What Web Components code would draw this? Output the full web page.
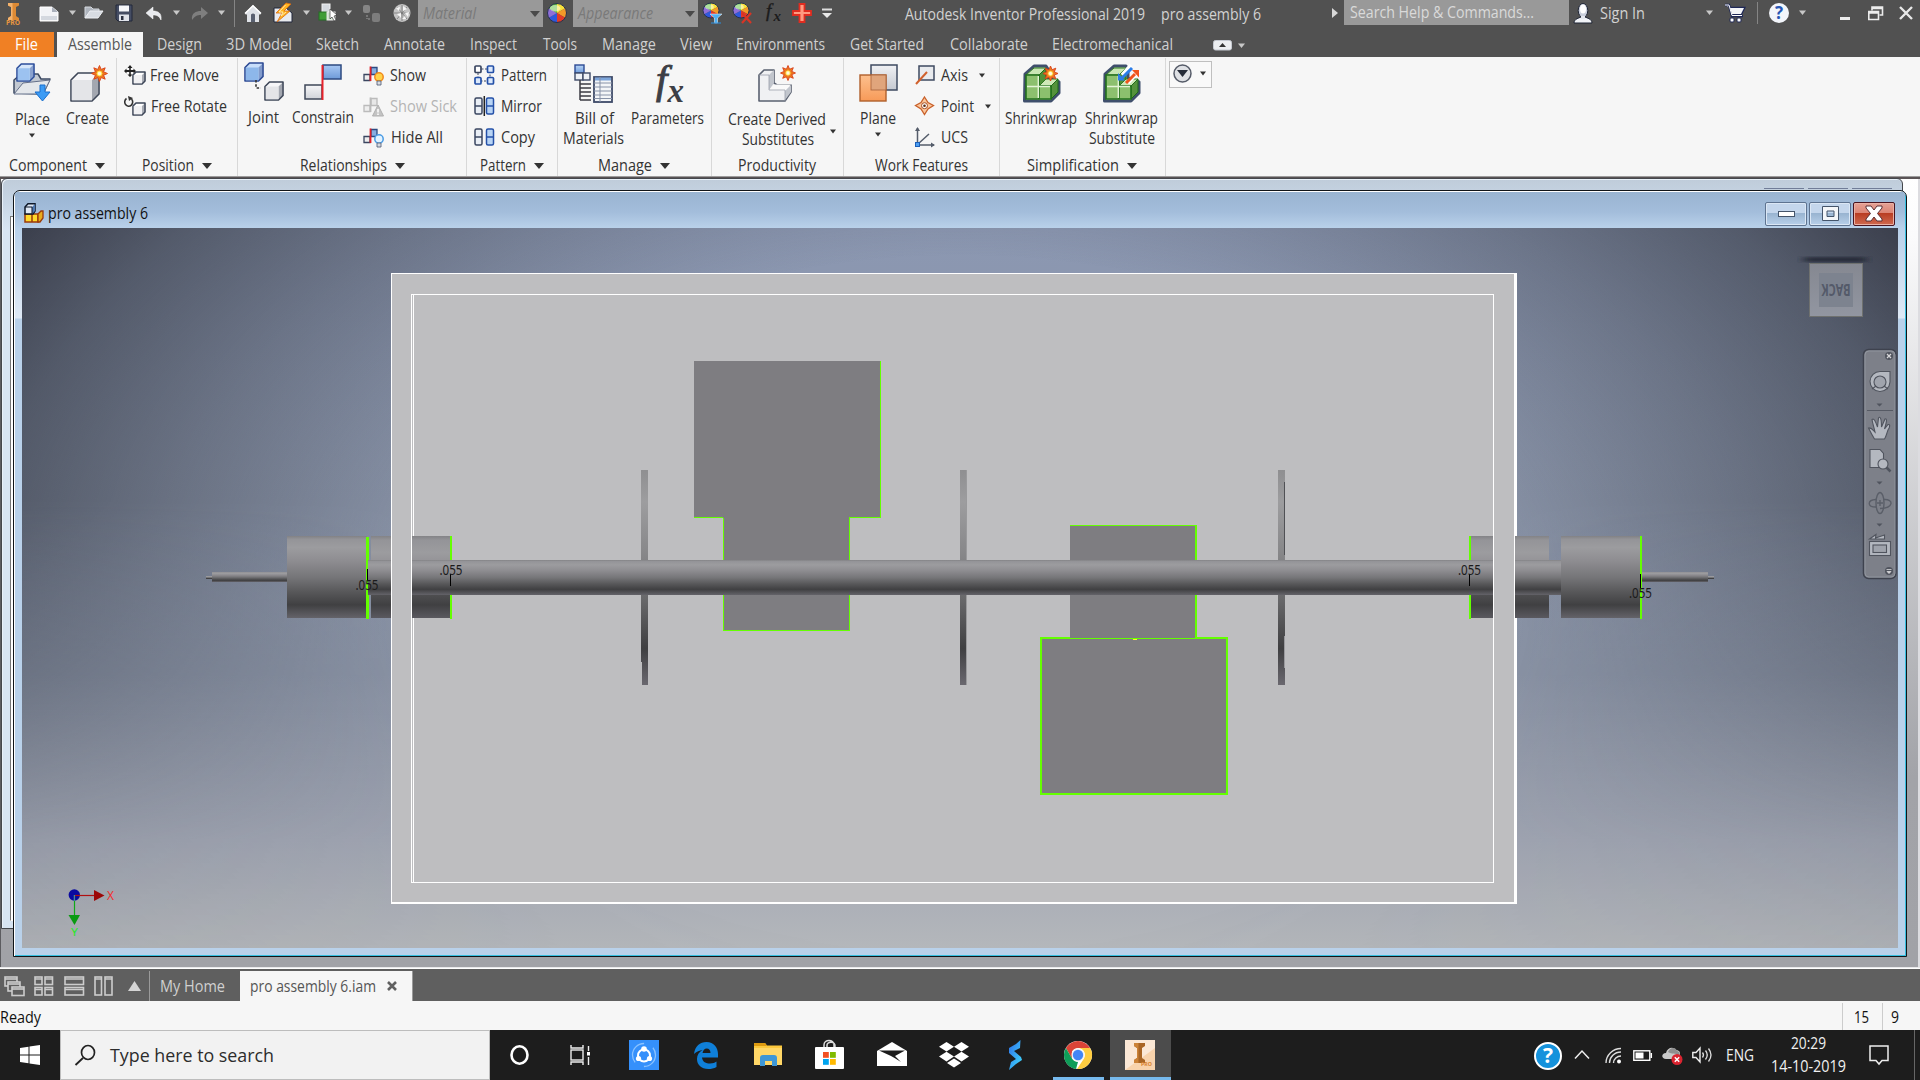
<!DOCTYPE html>
<html lang="en">
<head>
<meta charset="utf-8">
<title>Autodesk Inventor Professional 2019</title>
<style>
html,body{margin:0;padding:0;width:1920px;height:1080px;overflow:hidden;background:#f6f6f6}
body{font-family:"Open Sans","Noto Sans",sans-serif;font-size:15.8px;color:#333}
</style>
</head>
<body>
<inventor-app></inventor-app>
<script>
const define = (tag, cls) => customElements.define(tag, cls);
class Base extends HTMLElement {
  constructor() { super(); this.attachShadow({ mode: 'open' }); }
  connectedCallback() { this.shadowRoot.innerHTML = '<style>' + this.css() + '</style>' + this.html(); this.ready(); }
  css() { return ':host{display:block}'; }
  html() { return '<slot></slot>'; }
  ready() {}
}

/* A text run condensed or widened to the given width. */
define('fit-text', class extends Base {
  css() { return ':host{display:block;white-space:nowrap;height:20px;line-height:20px}span{display:inline-block;transform-origin:0 50%}'; }
  html() { return '<span><slot></slot></span>'; }
  ready() {
    const w = +this.getAttribute('w'), s = this.shadowRoot.querySelector('span');
    this.style.width = w + 'px';
    const n = s.getBoundingClientRect().width;
    if (n) s.style.transform = 'translateY(-1px) scaleX(' + (w / n).toFixed(4) + ')';
  }
});

/* Flex row: items are {x,y,w,html}; gaps become margins. */
const ROWCSS = '.row{display:flex;align-items:flex-start}.row>.c{flex:none}';
const row = (items, x0 = 0, y0 = 0) => {
  let p = x0;
  return '<div class="row">' + items.map(i => {
    const s = `<div class="c" style="margin-left:${(i.x - p).toFixed(1)}px;margin-top:${(i.y - y0).toFixed(1)}px;width:${i.w}px">${i.html}</div>`;
    p = i.x + i.w; return s;
  }).join('') + '</div>';
};
const T = (x, yc, w, s, st = '') => ({ x, y: yc - 10, w, html: `<fit-text w="${w}" style="${st}">${s}</fit-text>` });
const I = (x, y, w, h, name) => ({ x, y, w, html: `<ui-icon name="${name}" w="${w}" h="${h}"></ui-icon>` });
const B = (x, y, w, h, st, inner = '') => ({ x, y, w, html: `<div style="height:${h}px;${st}">${inner}</div>` });

const burst = (cx, cy, r) => { let p = ''; for (let i = 0; i < 16; i++) { const a = i * Math.PI / 8, q = i % 2 === 0 ? r : r * .55; p += (cx + q * Math.sin(a)).toFixed(1) + ',' + (cy - q * Math.cos(a)).toFixed(1) + ' '; } return `<polygon points="${p}" fill="#ee7a1c" stroke="#d8401a" stroke-width=".9"/><circle cx="${cx}" cy="${cy}" r="${r * .42}" fill="#ffe14a" stroke="#e8641a" stroke-width=".8"/><circle cx="${cx}" cy="${cy}" r="${r * .22}" fill="#fffbe0"/>`; };
const cube = (x, y, s, f, st, top = '#fff') => `<path d="M${x} ${y + s * .25}L${x + s * .25} ${y}H${x + s}V${y + s * .75}L${x + s * .75} ${y + s}H${x}Z" fill="${top}" stroke="${st}" stroke-width="1.6" stroke-linejoin="round"/><path d="M${x + s * .75} ${y + s * .25}L${x + s - .6} ${y + .8}V${y + s * .75}L${x + s * .75} ${y + s - 1}Z" fill="${st}" opacity=".45"/><rect x="${x + .8}" y="${y + s * .25}" width="${s * .75 - .8}" height="${s * .75 - .8}" fill="${f}"/>`;
const wheel = (cx, cy, rx, ry) => { const c2 = ['#f7e13a', '#f39a28', '#e23a28', '#3058dd', '#8f6fd8', '#5fbf3d']; let s = ''; for (let i = 0; i < 6; i++) { const a = i * Math.PI / 3, b = a + Math.PI / 3; s += `<path d="M${cx} ${cy}L${cx + rx * Math.sin(a)} ${cy - ry * Math.cos(a)}A${rx} ${ry} 0 0 1 ${cx + rx * Math.sin(b)} ${cy - ry * Math.cos(b)}Z" fill="${c2[i]}"/>`; } return s + `<ellipse cx="${cx}" cy="${cy}" rx="${rx}" ry="${ry}" fill="none" stroke="#26314f" stroke-width="1"/><ellipse cx="${cx - rx * .2}" cy="${cy - ry * .5}" rx="${rx * .55}" ry="${ry * .35}" fill="#fff" opacity=".5"/>`; };
const relation = (sick) => `<path d="M8 2.5h6v7h-6z" fill="${sick ? '#e8e8e8' : '#86aee0'}" stroke="${sick ? '#bbb' : '#2c4a80'}" stroke-width="1.3"/><path d="M1 9.500h6v6h-6z" fill="#eee" stroke="${sick ? '#bbb' : '#3a4660'}" stroke-width="1.3"/><path d="M7.500 1.500V16" stroke="${sick ? '#bbb' : '#e02028'}" stroke-width="1.800"/>`;
const brick = (l, r) => `<rect x="1" y="2" width="7" height="16" rx="1.500" fill="#e9eef5" stroke="${l}" stroke-width="1.500"/><path d="M1 10h7" stroke="${l}" stroke-width="1.500"/><rect x="12.500" y="2" width="7" height="16" rx="1.500" fill="#b8d4f5" stroke="${r}" stroke-width="1.500"/><path d="M12.500 10h7" stroke="${r}" stroke-width="1.500"/>`;
const shrink = `<path d="M3 10L12 2H24L26 5V14L37 18V29L29 37H2.500Z" fill="#cfe8b8" stroke="#3f4f6c" stroke-width="3" stroke-linejoin="round"/><path d="M4 11L12 4H24L17 11Z" fill="#c9e6b4" stroke="#2f7a22"/><path d="M17 11L24 4V16L17 22Z" fill="#4f9138" stroke="#1f6a18"/><path d="M17 22L24 15H36L29 22Z" fill="#cfe8b8" stroke="#2f7a22"/><path d="M29 22L36 15V28L29 35Z" fill="#55923c" stroke="#1f6a18"/><path d="M4 11H17V35H4ZM17 22H29V35H17Z" fill="#8cc06e" stroke="#22701c" stroke-width="1.600"/><path d="M5 22.500H28M16.300 12V34" stroke="#e3f4d6" stroke-width="1.400"/>`;
const linear = (id, a, b) => `<linearGradient id="${id}" x1="0" y1="0" x2="0" y2="1"><stop offset="0" stop-color="${a}"/><stop offset="1" stop-color="${b}"/></linearGradient>`;

const ICONS = {
  logo: '<path d="M1 0H12V2.500L9 4V13L12 15V17H1V15L4 13V4L1 2.500Z" fill="#dd8a35"/><path d="M1 0H5.500V17H1V15L4 13V4L1 2.500Z" fill="#f4b26c"/>',
  down: '<path d="M0 .5H7L3.500 5Z" fill="#c8c8c8"/>',
  downd: '<path d="M0 .5H6L3 4.500Z" fill="#333"/>',
  downbig: '<path d="M0 0H10L5 6Z" fill="#333"/>',
  downcombo: '<path d="M0 0H10L5 6Z" fill="#4a4a4a"/>',
  newdoc: '<path d="M1 1H13L19 6V15H1Z" fill="#f2f3f6" stroke="#fff"/><path d="M13 1V6H19Z" fill="#aab0bb"/><path d="M2 10H18V14H2Z" fill="#d4d8df"/>',
  open: '<path d="M1 12V1H7L9 3H15V5" fill="#aeb4bd" stroke="#d5d9df"/><path d="M1 12L6 5H19L14 12Z" fill="#d8dce2" stroke="#eef0f3"/>',
  save: '<path d="M1 1H17V17H3L1 15Z" fill="#454d63" stroke="#23283a"/><rect x="4" y="1.500" width="10" height="6" fill="#f6f7fa"/><rect x="4" y="10.500" width="10" height="6.500" fill="#e0e3ea"/><rect x="6" y="12" width="2.500" height="4" fill="#2b3040"/>',
  undo: '<path d="M0 6L7 0V4C12 4 16 6 15 13C13 9 11 8 7 8V12Z" fill="#e8eaee" stroke="#fff" stroke-width=".5"/>',
  redo: '<path d="M17 6L10 0V4C5 4 0 6 1 13C4 9 6 8 10 8V12Z" fill="#7e7e7e"/>',
  home: '<path d="M0 8L8 0L16 8L15 10L14 9V17H2V9L1 10Z" fill="#dfe2e7"/><path d="M6 17V9.500Q8 7.500 10 9.500V17Z" fill="#596070"/><path d="M0 8.500L8 .8L16 8.500" fill="none" stroke="#fff" stroke-width="1.500"/>',
  bolt: '<path d="M1 5H13L19 10V19H1Z" fill="#e9ebef" stroke="#20263a"/><path d="M13 0L3 10H9L4 19L17 8H11L18 1Z" fill="#ffb31f" stroke="#d86b14" stroke-width=".8"/><path d="M12.500 2L6 9H10L8 13L13 9" fill="none" stroke="#ffe9a8" stroke-width="1"/>',
  cubes: '<rect x="4" y="1" width="8" height="8" fill="#d5d9df" stroke="#f2f2f2"/><rect x="1" y="9" width="8" height="8" fill="#3f9d36" stroke="#246e24"/><rect x="9" y="9" width="8" height="8" fill="#cfe2cf" stroke="#eee"/><path d="M12 6L19 12L16 13L18 17L16 18L14 14L12 16Z" fill="#fff" stroke="#222" stroke-width=".6"/>',
  linked: '<rect x="1" y="1" width="7" height="8" rx="2" fill="#858585"/><rect x="10" y="9" width="8" height="9" rx="2" fill="#7d7d7d"/><path d="M5 11V15M6 15H9" stroke="#777" stroke-width="2" stroke-dasharray="2 1"/>',
  ball: '<ellipse cx="9" cy="9" rx="8.500" ry="9" fill="#c4c4c4"/><path d="M9 1V17M1 9H17M4 3L14 15M14 3L4 15" stroke="#777" stroke-width=".8"/><path d="M3 4L7 3L6 7ZM10 2L14 5L10 7ZM12 9L16 8L15 13ZM4 10L8 9L8 14ZM9 15L12 12L13 15Z" fill="#f6f6f6"/>',
  wheel: wheel(10, 10, 9.5, 9.5),
  wheelf: wheel(9, 7.5, 8, 7.5) + '<path d="M8 11H20L15.500 15V20H12.500V15Z" fill="#4db1f5" stroke="#fff" stroke-width=".5"/><path d="M9 20H19" stroke="#2b8fe0"/>',
  wheelx: wheel(9, 7.500, 8, 7.500) + '<path d="M10 10L19 20M19 10L10 20" stroke="#d83525" stroke-width="2.200"/>',
  fxs: '<g font-family="Liberation Serif,serif" font-style="italic" fill="#1c1c1c"><text x="2" y="14.500" font-size="19" stroke="#1c1c1c" stroke-width=".4">f</text><text x="9.500" y="18.500" font-size="15" font-weight="700">x</text></g>',
  fxl: '<g font-family="Liberation Serif,serif" font-style="italic" fill="#3d3f46"><text x="5" y="29.500" font-size="41" stroke="#3d3f46" stroke-width="1">f</text><text x="16.500" y="38.500" font-size="33" font-weight="700">x</text></g>',
  plus: '<path d="M7.500 1H12.500V8H19V12H12.500V19H7.500V12H1V8H7.500Z" fill="#ff9a80" stroke="#e02c20" stroke-width="1.800"/>',
  custom: '<path d="M0 1.500H10" stroke="#ddd" stroke-width="2"/><path d="M0 5H10L5 10Z" fill="#e8e8e8"/>',
  right: '<path d="M0 0L6 5L0 10Z" fill="#d8d8d8"/>',
  user: '<path d="M1 20C1 16 6 15 8 14H12C14 15 19 16 19 20Z" fill="#f1f3f7" stroke="#1e2434"/><ellipse cx="10" cy="7.500" rx="4.800" ry="7" fill="#c9cedb" stroke="#1e2434"/><ellipse cx="10" cy="6" rx="3" ry="4.500" fill="#fff"/><path d="M8 13H12V16H8Z" fill="#e5e8ef"/>',
  cart: '<path d="M0 1H4L7 12H18M5 4H19L16 10H7" fill="#e8eaf0" stroke="#1f2857" stroke-width="2.500"/><path d="M5 4H19L16 10H7Z" fill="#f4f5f8"/><path d="M0 1H4L7 11.500H17" fill="none" stroke="#fff" stroke-width="1"/><rect x="5" y="14" width="4" height="4" rx="1" fill="#fff" stroke="#1f2857"/><rect x="12" y="14" width="4" height="4" rx="1" fill="#fff" stroke="#1f2857"/>',
  min: '<rect width="10" height="3" fill="#ececec"/>',
  restore: '<path d="M4 4.500V1H14.500V9H11.500M4 2.500H14" fill="none" stroke="#ececec" stroke-width="1.600"/><path d="M.8 5.500H10.500V13.500H.8ZM.8 7H10.500" fill="none" stroke="#ececec" stroke-width="1.600"/>',
  close: '<path d="M1 1L13 13M13 1L1 13" stroke="#e8e8e8" stroke-width="2.400"/>',
  tabup: '<rect x=".5" y=".5" width="18" height="9.500" rx="2" fill="#eceef1" stroke="#c5c9d1"/><path d="M6 7L9.500 3L13 7Z" fill="#333"/>',
  place: '<path d="M1 30V17L8 11H25L28 16H37L30 31Z" fill="#c3c9d2" stroke="#3d4a63" stroke-width="1.500" stroke-linejoin="round"/><path d="M1 31L10 20L37 17L30 31Z" fill="#e4e7eb" stroke="#65708a" stroke-width="1"/>' + cube(4, 1, 17, '#9cc2f0', '#2e4f9c', '#d6e6fa') + '<path d="M27 22H32V29H37L29.500 38L22 29H27Z" fill="#3b9bf5" stroke="#1b6fcc"/>',
  create: cube(1, 8, 28, '#e4e5e8', '#3e4758', '#f6f6f8') + burst(29.5, 8.5, 8),
  joint: cube(1, 1, 18, '#8db7ea', '#2c4a94', '#c8defa') + '<path d="M12 18V26H17" fill="none" stroke="#333" stroke-width="1.600" stroke-dasharray="2.500 1.800"/>' + cube(21, 20, 18, '#e4e5e8', '#3e4758', '#f6f6f8'),
  constrain: '<defs>' + linear('a', '#a8c8f4', '#6d9ad8') + linear('b', '#f6f6f8', '#d0d3d9') + '</defs><rect x="19" y="1" width="18" height="14" fill="url(#a)" stroke="#2c4a80" stroke-width="1.500"/><rect x="1" y="21" width="17" height="14" fill="url(#b)" stroke="#3e4758" stroke-width="1.500"/><path d="M18.500 1V36" stroke="#e8222b" stroke-width="2"/>',
  fmove: cube(9, 7, 12, '#f1f1f3', '#3e4758') + '<path d="M6 0L8.500 3H6.800V5H9.500V3.500L12 6L9.500 8.500V7H6.800V9.500H8.500L6 12L3.500 9.500H5.200V7H2.500V8.500L0 6L2.500 3.500V5H5.200V3H3.500Z" fill="#222"/>',
  frot: cube(9, 7, 12, '#f1f1f3', '#3e4758') + '<path d="M2.500 2.500A4 4.200 0 1 0 7.500 3" fill="none" stroke="#333" stroke-width="1.600"/><path d="M4 0L9 2L5 5Z" fill="#333"/>',
  show: relation(0) + '<circle cx="16" cy="12" r="4.200" fill="#ffd34a" stroke="#f08a1c" stroke-width="1.500"/><path d="M14 16H18V20H14Z" fill="#d8dbe2" stroke="#4a5672" stroke-width=".8"/>',
  sick: relation(1) + '<path d="M15 9L20.500 20H9.500Z" fill="#c4c4c4" stroke="#b0b0b0"/><path d="M15 13V16.500M15 17.500V19" stroke="#fff" stroke-width="1.500"/>',
  hide: relation(0) + '<circle cx="16" cy="12" r="4.200" fill="#e3f3ff" stroke="#4a9be4" stroke-width="1.500"/><path d="M14 16H18V20H14Z" fill="#d8dbe2" stroke="#4a5672" stroke-width=".8"/>',
  pattern: '<path d="M4 4H16V16H4Z" fill="none" stroke="#3a4660" stroke-dasharray="2 1.500"/><g fill="#dce9fb" stroke="#2450a8" stroke-width="1.700"><rect x="1" y="1" width="6" height="6.500" rx="1" fill="#fff" stroke="#3a4660"/><rect x="13.500" y="1" width="6" height="6.500" rx="1"/><rect x="1" y="12.500" width="6" height="6.500" rx="1"/><rect x="13.500" y="12.500" width="6" height="6.500" rx="1"/></g>',
  mirror: brick('#3a4660', '#2450a8') + '<path d="M10.300 0V20" stroke="#222" stroke-width="1.500"/>',
  copy: brick('#3a4660', '#2450a8'),
  bom: '<defs>' + linear('a', '#b9d5f6', '#6e9cdb') + '</defs><rect x="1" y="1" width="9" height="8" fill="url(#a)" stroke="#2c4a94" stroke-width="1.400"/><rect x="1" y="9" width="8" height="7" fill="#eef1f6" stroke="#3e4a68" stroke-width="1.400"/><rect x="9" y="9" width="7" height="7" fill="#eef1f6" stroke="#3e4a68" stroke-width="1.400"/><path d="M6 16V36M6 20H17M6 24H17M6 28H17M6 32H17M6 36H17" stroke="#3d3d44" stroke-width="1.500"/><rect x="20" y="13" width="18" height="25" fill="#f3f5f8" stroke="#3e4a68" stroke-width="1.800"/><path d="M21 15H37" stroke="#7da5da" stroke-width="3"/><path d="M20 19H38M20 23H38M20 27H38M20 31H38M20 34.500H38M26 13V38" stroke="#8792a8" stroke-width="1"/>',
  derived: '<path d="M2 10L7 5H17V18L20 20H34V27L28 36H2Z" fill="#f0f1f3" stroke="#5a6170" stroke-width="1.600" stroke-linejoin="round"/><path d="M12 10L17 5V18L12 25Z" fill="#c2c6cd"/><path d="M12 25L17 19.500H34L28 26Z" fill="#fafafa"/><path d="M28 26L34 20V27L28 35Z" fill="#c2c6cd"/><path d="M2 10H12V25H28V36" fill="none" stroke="#9aa0aa" stroke-width=".8"/>' + burst(31, 8, 7.5),
  plane: '<defs>' + linear('a', '#f0f1f4', '#c5c9d1') + linear('b', '#fdc08e', '#f79a58') + '</defs><rect x="12" y="1" width="26" height="25" fill="url(#a)" stroke="#3e4a60" stroke-width="1.500"/><rect x="1" y="11" width="26" height="26" fill="url(#b)" stroke="#b0602c" stroke-width="1.400"/><rect x="12" y="11" width="15" height="15" fill="#e0a57c" stroke="#a5603a" stroke-width=".8"/>',
  axis: '<rect x="4" y="1" width="15" height="14" fill="#e9ebee" stroke="#3e4a60" stroke-width="1.500"/><path d="M1 19L12 7" stroke="#d0602c" stroke-width="2"/>',
  point: '<path d="M9.500 1L13 6.500L18.500 9.500L13 13L9.500 18.500L6 13L.5 9.500L6 6.500Z" fill="#fbc79c" stroke="#c8602a" stroke-width="1.300"/><circle cx="9.500" cy="9.700" r="3" fill="#fff" stroke="#a84c20"/><circle cx="9.500" cy="9.700" r="1.300" fill="#5a2a10"/>',
  ucs: '<path d="M2.500 1V18H19M3 17L14 7" fill="none" stroke="#555d6b" stroke-width="1.500"/><path d="M0 4L2.500 0L5 4ZM16 15.500L20 18L16 20.500Z" fill="#555d6b"/><rect x=".5" y="15.500" width="4" height="4" fill="#4a9df2" stroke="#1b5fb8"/>',
  shrink: shrink + burst(28.5, 9.500, 7.500),
  shrinks: shrink + '<path d="M29 1L20 11M37 7L26 19" stroke-width="3.500" stroke="#fff"/><path d="M30 4L20 14" stroke="#2b7de8" stroke-width="3"/><path d="M16 16.500V9L23 16.500Z" fill="#2b7de8"/><path d="M24 19L33 10" stroke="#f0551c" stroke-width="3"/><path d="M37 6V13.500L30 6Z" fill="#f0551c"/>',
  more: '<circle cx="9.500" cy="9.500" r="8.500" fill="#dfe1e5" stroke="#555b68" stroke-width="1.500"/><path d="M4 6H15L9.500 13Z" fill="#252b38"/>',
  asm: '<rect x="1" y="11" width="13" height="8" fill="#ffd92c" stroke="#9b3a08" stroke-width="1.500"/><path d="M14 11L17 8H19V15L16 19H14Z" fill="#e8ac1c" stroke="#9b3a08" stroke-width="1.300"/><path d="M8 11V19" stroke="#9b3a08" stroke-width="1.500"/><path d="M1 4L4 .8H11V8L9 11H1Z" fill="#dfe8f5" stroke="#0d1728" stroke-width="1.500"/><path d="M8 4L11 1V8L8 11Z" fill="#4f78b0"/><path d="M1 4H8V11" fill="none" stroke="#0d1728"/>',
  wmin: '<rect x=".5" y=".5" width="16" height="5" fill="#fff" stroke="#44546a"/>',
  wmax: '<path d="M.5 .5H16.500V14.500H.5ZM5 5V10.500H12V5Z" fill="#f4f6f9" stroke="#44546a" fill-rule="evenodd"/>',
  wclose: '<path d="M1 0H6L9 4L12 0H17V2L12.500 7.500L17 13V15H12L9 11L6 15H1V13L5.500 7.500L1 2Z" fill="#fff" stroke="#5a3036" stroke-width="1"/>',
  cascade: '<g fill="#5f5f5f" stroke="#ccc" stroke-width="1.600"><rect x="1" y="1" width="12" height="9"/><path d="M1 3H13"/><rect x="4" y="6" width="12" height="9"/><path d="M4 8H16"/><rect x="8" y="11" width="12" height="8.500"/><path d="M8 13H20"/></g>',
  grid: '<g fill="none" stroke="#ccc" stroke-width="1.600"><rect x="1" y="1" width="7" height="7.500"/><rect x="11" y="1" width="7.500" height="7.500"/><rect x="1" y="11.500" width="7" height="7.500"/><rect x="11" y="11.500" width="7.500" height="7.500"/><path d="M1 3H8M11 3H18M1 13.500H8M11 13.500H18"/></g>',
  hsplit: '<g fill="none" stroke="#ccc" stroke-width="1.600"><rect x="1" y="1" width="18.500" height="7.500"/><rect x="1" y="11.500" width="18.500" height="7.500"/><path d="M1 3H19M1 13.500H19"/></g>',
  vsplit: '<g fill="none" stroke="#ccc" stroke-width="1.600"><rect x="1" y="1" width="6.500" height="18"/><rect x="11" y="1" width="7" height="18"/><path d="M1 3H7M11 3H18"/></g>',
  tri: '<path d="M6.500 0L13 10H0Z" fill="#d5d5d5"/>',
  tabx: '<path d="M1 1L9 9M9 1L1 9" stroke="#606060" stroke-width="2.600"/>',
  win: '<path d="M0 3L8.500 1.700V9.500H0ZM9.500 1.500L20 0V9.500H9.500ZM0 10.500H8.500V18.300L0 17ZM9.500 10.500H20V20L9.500 18.500Z" fill="#fff"/>',
  search: '<ellipse cx="13" cy="7.500" rx="6.500" ry="7" fill="none" stroke="#222" stroke-width="1.700"/><path d="M8 13L.5 20" stroke="#222" stroke-width="1.800"/>',
  ring: '<ellipse cx="9.500" cy="10" rx="8" ry="8.800" fill="none" stroke="#fff" stroke-width="2.600"/>',
  tview: '<g fill="none" stroke="#eee" stroke-width="1.400"><rect x="1" y="5" width="12" height="10"/><path d="M1 0V3H13V0M1 20V17H13V20M18.500 1V6M18.500 12V20"/></g><rect x="17" y="7" width="3" height="3.500" fill="#fff"/>',
  shareit: '<rect width="30" height="30" fill="#3590fb"/><circle cx="15" cy="15" r="11.500" fill="none" stroke="#8ac2ff" stroke-width="1.300" stroke-dasharray="26 10" stroke-dashoffset="8"/><circle cx="15" cy="15.500" r="6" fill="none" stroke="#fff" stroke-width="2"/><circle cx="15" cy="9" r="2.800" fill="#fff"/><circle cx="9.500" cy="18.500" r="2.600" fill="#fff"/><circle cx="20.500" cy="18.500" r="2.600" fill="#fff"/>',
  edge: '<path d="M0 12C1 4 6 0 12.500 0C20 0 24 6 24 12V15.500H8C8.500 20 12 21.500 16 21.500C19 21.500 21 20.500 22.500 19.500V25C20 26.500 17 27 14.500 27C7 27 3 22.500 3 17C3 13 5 10 8.500 8C6 8.500 2 9.500 0 12ZM8.500 11H16.500C16.500 8 15 6.500 12.800 6.500C10.500 6.500 9 8.500 8.500 11Z" fill="#0f7fd8" fill-rule="evenodd"/>',
  folder: '<path d="M0 0H11L13 2.500H28V22H0Z" fill="#fcc83c"/><path d="M0 0H11L13 3H0Z" fill="#dd9a10"/><path d="M0 5H28V22H0Z" fill="#ffd767"/><path d="M6 23V15C6 13 7 12 9 12H20C22 12 23 13 23 15V23H18V18H11V23Z" fill="#3e97d6"/>',
  store: '<path d="M9 8V5C9 -1 19 -1 19 5V8M12 8V5C12 1 21 1 20 7" fill="none" stroke="#ddd" stroke-width="1.500"/><rect x="0" y="7" width="29" height="22" rx="1" fill="#fff"/><rect x="8" y="12" width="5.800" height="5.800" fill="#f25022"/><rect x="15" y="12" width="5.800" height="5.800" fill="#7fba00"/><rect x="8" y="19" width="5.800" height="5.800" fill="#00a4ef"/><rect x="15" y="19" width="5.800" height="5.800" fill="#ffb900"/>',
  mail: '<path d="M0 9L15 0L30 9V24H0Z" fill="#fff"/><path d="M2 8.500H28L18 14L24 20Q17 15.500 14 14Z" fill="#1c1c1c"/>',
  dropbox: '<path d="M7.500 0L15 4.800L7.500 9.600L0 4.800ZM22.500 0L30 4.800L22.500 9.600L15 4.800ZM7.500 9.800L15 14.600L7.500 19.400L0 14.600ZM22.500 9.800L30 14.600L22.500 19.400L15 14.600ZM15 16.500L22 21L15 25.500L8 21Z" fill="#fff"/>',
  bluefox: '<defs><linearGradient id="g" x1="0" y1="0" x2="1" y2="1"><stop offset="0" stop-color="#2f6fe8"/><stop offset="1" stop-color="#3fe0ff"/></linearGradient></defs><path d="M13.500 0L13 8L7 11L14 17L15 20L9 24L2 30L4 22L9 19L2 13L2 8L9 4Z" fill="url(#g)"/>',
  chrome: '<circle cx="14" cy="14" r="14" fill="#fff"/><path d="M1.900 7A14 14 0 0 1 26.100 7H14A7 7 0 0 0 8 10.500L7.900 17.500Z" fill="#db4437"/><path d="M1.900 7L8 17.500A7 7 0 0 0 14 21L12 28A14 14 0 0 1 1.900 7Z" fill="#0f9d58"/><path d="M26.100 7H14A7 7 0 0 1 20 17.500L13 28A14 14 0 0 0 26.100 7Z" fill="#ffcd40"/><circle cx="14" cy="14" r="6.500" fill="#f1f1f1"/><circle cx="14" cy="14" r="5.200" fill="#4285f4"/>',
  inv: '<rect width="30" height="30" fill="#fbe8d6"/><path d="M0 30L30 8V30Z" fill="#f8d3ac"/><path d="M9 3H20V6L17 8V18L20 20V23H9V20L12 18V8L9 6Z" fill="#a96524"/><path d="M9 3H13.500V23H9V20L12 18V8L9 6Z" fill="#cc8338"/>',
  chev: '<path d="M1 8.500L8 1L15 8.500" fill="none" stroke="#eee" stroke-width="1.500"/>',
  wifi: '<g fill="none" stroke="#ddd" stroke-width="1.400"><path d="M1 16C1 8 8 1.500 16 1.500"/><path d="M4.500 16C4.500 10 9.500 5 16 5"/><path d="M8.500 16C8.500 12 12 9 16 9"/></g><circle cx="14" cy="14.500" r="2" fill="#fff"/>',
  batt: '<rect x=".8" y=".8" width="16" height="9.500" fill="none" stroke="#fff" stroke-width="1.400"/><rect x="2.500" y="2.500" width="8" height="6" fill="#fff"/><path d="M18.300 3V8" stroke="#fff" stroke-width="1.500"/>',
  cloud: '<path d="M4 12C-1 12 -1 6 4 6C5 1 11 -1 14 3C18 3 19 7 17 9V12Z" fill="#c9c9c9"/><path d="M6 5C8 0 14 0 15 4C18 4 18 8 17 9C13 5 10 8 6 5Z" fill="#8f8f8f"/><circle cx="15" cy="12.500" r="5.500" fill="#da2430"/><path d="M12.800 10.300L17.200 14.700M17.200 10.300L12.800 14.700" stroke="#fff" stroke-width="1.500"/>',
  vol: '<path d="M.8 5.500H4L8 1V15L4 10.500H.8Z" fill="none" stroke="#eee" stroke-width="1.400"/><path d="M10.500 5.500Q12.500 8 10.500 10.500M13.500 3.500Q17 8 13.500 12.500M16.500 1.500Q21.500 8 16.500 14.500" fill="none" stroke="#ddd" stroke-width="1.300"/>',
  note: '<path d="M1 1H19V15.500H13L10 19L7 15.500H1Z" fill="none" stroke="#eee" stroke-width="1.500"/>'
};
define('ui-icon', class extends Base {
  css() { return ':host{display:block}svg{display:block;overflow:visible}'; }
  html() { const w = this.getAttribute('w'), h = this.getAttribute('h'); return `<svg width="${w}" height="${h}" viewBox="0 0 ${w} ${h}">${ICONS[this.getAttribute('name')]}</svg>`; }
});

define('title-bar', class extends Base {
  css() { return ':host{display:block;height:32px;background:#515151;color:#d2d2d2}' + ROWCSS; }
  html() {
    const sep = (x, y, h) => B(x, y, 1, h, 'background:#858585');
    const combo = 'background:#999;display:flex;align-items:center;justify-content:space-between;padding:0 3px 0 5px;box-sizing:border-box;color:#7a7a7a;font-style:italic';
    return row([
      B(6, 3, 15, 26, '', '<div style="padding-left:1px"><ui-icon name="logo" w="13" h="17"></ui-icon></div><fit-text w="14" style="font-size:7px;font-weight:700;color:#e8963f;height:8px;line-height:8px">PRO</fit-text>'),
      I(39, 6, 20, 16, 'newdoc'), I(69, 10, 7, 5, 'down'), I(84, 6, 19, 13, 'open'), I(115, 4, 18, 18, 'save'),
      I(146, 7, 16, 14, 'undo'), I(173, 10, 7, 5, 'down'), I(191, 7, 17, 14, 'redo'), I(218, 10, 7, 5, 'down'), sep(234, 0, 27),
      I(245, 5, 16, 17, 'home'), I(273, 3, 20, 20, 'bolt'), I(303, 10, 7, 5, 'down'), I(318, 3, 19, 19, 'cubes'), I(345, 10, 7, 5, 'down'),
      I(362, 4, 18, 18, 'linked'), I(393, 4, 18, 18, 'ball'),
      B(418, 0, 125, 27, combo, '<fit-text w="53">Material</fit-text><ui-icon name="downcombo" w="10" h="6"></ui-icon>'),
      I(547, 3, 20, 20, 'wheel'),
      B(573, 0, 125, 27, combo, '<fit-text w="75">Appearance</fit-text><ui-icon name="downcombo" w="10" h="6"></ui-icon>'),
      I(702, 3, 20, 20, 'wheelf'), I(732, 3, 20, 20, 'wheelx'),
      I(764, 2, 18, 20, 'fxs'), I(792, 3, 20, 20, 'plus'), I(822, 8, 10, 10, 'custom'),
      T(905, 15, 240, 'Autodesk Inventor Professional 2019'), T(1161, 15, 100, 'pro assembly 6'),
      I(1332, 8, 6, 10, 'right'),
      B(1344, 0, 225, 25, 'background:#999;padding:3px 0 0 6px;box-sizing:border-box;color:#dadada', '<fit-text w="184">Search Help &amp; Commands...</fit-text>'),
      I(1573, 3, 20, 20, 'user'), T(1600, 14, 45, 'Sign In'), I(1706, 10, 7, 5, 'down'), I(1725, 4, 20, 18, 'cart'), sep(1757, 2, 22),
      B(1769, 3, 20, 20, 'border-radius:50%;background:#f3f6fb;color:#2756b4;font-weight:700;text-align:center;line-height:20px;font-size:17px', '?'),
      I(1799, 10, 7, 5, 'down'), I(1840, 17, 10, 3, 'min'), I(1868, 6, 15, 14, 'restore'), I(1899, 6, 14, 14, 'close')
    ]);
  }
});

define('ribbon-tabs', class extends Base {
  css() { return ':host{display:block;height:25px;background:#515151;color:#d0d0d0}' + ROWCSS; }
  html() {
    const pill = (x, w, bg, c, pad, tw, s) => B(x, 32, w, 25, `background:${bg};color:${c};padding:3px 0 0 ${pad}px;box-sizing:border-box`, `<fit-text w="${tw}">${s}</fit-text>`);
    return row([
      pill(0, 54, '#f08024', '#fff', 15, 23, 'File'), pill(57, 86, '#f6f6f6', '#555', 11, 64, 'Assemble'),
      ...[[157, 45, 'Design'], [226, 66, '3D Model'], [316, 43, 'Sketch'], [384, 61, 'Annotate'], [470, 47, 'Inspect'], [543, 34, 'Tools'], [602, 54, 'Manage'], [680, 32, 'View'], [736, 89, 'Environments'], [850, 74, 'Get Started'], [950, 78, 'Collaborate'], [1052, 121, 'Electromechanical']].map(a => T(a[0], 45, a[1], a[2])),
      I(1213, 40, 19, 10, 'tabup'), I(1238, 43, 7, 5, 'down')
    ], 0, 32);
  }
});

/* Ribbon panel: slotted tools over a caption. */
define('ribbon-panel', class extends Base {
  css() { return ':host{display:flex;flex-direction:column;flex:none;box-sizing:border-box;height:118px;border-right:1px solid #d8d8d8}.body{height:98px}.cap{display:flex;align-items:center;gap:8px;height:20px}' + ROWCSS; }
  html() { const g = n => this.getAttribute(n); return `<div class="body"><slot></slot></div><div class="cap" style="padding-left:${g('cx')}px"><fit-text w="${g('cw')}">${g('cap')}</fit-text>${this.hasAttribute('drop') ? '<ui-icon name="downbig" w="10" h="6"></ui-icon>' : ''}</div>`; }
});
define('tool-ribbon', class extends Base {
  css() { return ':host{display:flex;height:119px;background:#f6f6f6;color:#333;padding-top:1px;box-sizing:border-box}' + ROWCSS + '.col{display:flex;flex-direction:column}'; }
  html() {
    const Y = 58;
    const panel = (x, x2, cap, cx, cw, drop, items) => `<ribbon-panel style="width:${x2 - x}px" cap="${cap}" cx="${cx - x}" cw="${cw}" ${drop ? 'drop' : ''}>${row(items, x, Y)}</ribbon-panel>`;
    /* Large button column: icon, caption lines, optional arrow. */
    const big = (x, w, ix, iy, iw, ih, icon, lines, arrow) => {
      let p = Y, h = `<div class="col">`;
      const put = (px, py, ph, html) => { h += `<div style="margin:${py - p}px 0 0 ${px - x}px;height:${ph}px">${html}</div>`; p = py + ph; };
      put(ix, iy, ih, `<ui-icon name="${icon}" w="${iw}" h="${ih}"></ui-icon>`);
      lines.forEach(l => put(l[0], l[1] - 10, 20, `<fit-text w="${l[2]}">${l[3]}</fit-text>`));
      if (arrow) put(arrow[0], arrow[1], 5, '<ui-icon name="downd" w="6" h="5"></ui-icon>');
      return { x, y: Y, w, html: h + '</div>' };
    };
    const small = (x, w, ix, iw, rows) => ({ x, y: Y, w, html: '<div class="col" style="padding-top:3px">' + rows.map(r => `<div style="height:31px;color:${r[4] || 'inherit'}">${row([I(ix, 3.5, iw, 20, r[0]), T(r[1], 15, r[2], r[3]), ...(r[5] ? [I(r[5], 12, 6, 5, 'downd')] : [])], x, 0)}</div>`).join('') + '</div>' });
    return panel(0, 117, 'Component', 9, 78, 1, [big(8, 48, 13, 63, 38, 38, 'place', [[15, 120, 35, 'Place']], [29, 133]), big(60, 54, 70, 65, 38, 38, 'create', [[66, 119, 43, 'Create']])]) +
      panel(117, 238, 'Position', 142, 52, 1, [small(120, 112, 124, 21, [['fmove', 150, 69, 'Free Move'], ['frot', 151, 76, 'Free Rotate']])]) +
      panel(238, 467, 'Relationships', 300, 87, 1, [big(242, 44, 244, 62, 39, 39, 'joint', [[248, 118, 31, 'Joint']]), big(290, 66, 304, 64, 38, 36, 'constrain', [[292, 118, 62, 'Constrain']]), small(360, 100, 363, 21, [['show', 390, 36, 'Show'], ['sick', 390, 67, 'Show Sick', '#b4b4b4'], ['hide', 391, 52, 'Hide All']])]) +
      panel(467, 558, 'Pattern', 480, 46, 1, [small(470, 84, 474, 20, [['pattern', 501, 46, 'Pattern'], ['mirror', 501, 41, 'Mirror'], ['copy', 501, 34, 'Copy']])]) +
      panel(558, 712, 'Manage', 598, 54, 1, [big(561, 66, 574, 64, 39, 38, 'bom', [[575, 119, 39, 'Bill of'], [563, 139, 61, 'Materials']]), big(629, 78, 651, 63, 34, 38, 'fxl', [[631, 119, 73, 'Parameters']])]) +
      panel(712, 844, 'Productivity', 738, 78, 0, [big(722, 106, 757, 65, 39, 38, 'derived', [[728, 120, 98, 'Create Derived'], [742, 140, 72, 'Substitutes']]), I(830, 129, 6, 5, 'downd')]) +
      panel(844, 1000, 'Work Features', 875, 93, 0, [big(855, 50, 859, 64, 39, 38, 'plane', [[860, 119, 36, 'Plane']], [875, 132]), small(910, 86, 915, 20, [['axis', 941, 27, 'Axis', '', 979], ['point', 941, 33, 'Point', '', 985], ['ucs', 941, 27, 'UCS']])]) +
      panel(1000, 1166, 'Simplification', 1027, 92, 1, [big(1002, 78, 1022, 64, 38, 38, 'shrink', [[1005, 119, 72, 'Shrinkwrap']]), big(1082, 80, 1102, 64, 38, 38, 'shrinks', [[1085, 119, 73, 'Shrinkwrap'], [1089, 139, 66, 'Substitute']])]) +
      row([B(1169, 61, 43, 27, 'border:1px solid #bfbfbf;box-sizing:border-box;background:#f9f9f9;display:flex;align-items:center;gap:8px;padding:0 0 2px 3px', '<ui-icon name="more" w="19" h="19"></ui-icon><ui-icon name="downd" w="6" h="5"></ui-icon>')], 1166, Y);
  }
});

define('model-view', class extends Base {
  css() { return `:host{display:block;position:relative;width:1876px;height:720px;overflow:hidden;background:linear-gradient(#8c98b2,#8791a5 38%,#8992a4 62%,#a1a6b3 85%,#b4b7bb)}
    .shade{position:absolute;inset:0;background:radial-gradient(1115px 688px at 938px 372px,rgba(62,67,79,0) 50%,rgba(62,67,79,.40) 72%,rgba(60,65,77,.7) 88%,#3b3f4c 100%);-webkit-mask-image:linear-gradient(#000 0,#000 38%,rgba(0,0,0,.62) 60%,rgba(0,0,0,.16) 85%,rgba(0,0,0,.08));mask-image:linear-gradient(#000 0,#000 38%,rgba(0,0,0,.62) 60%,rgba(0,0,0,.16) 85%,rgba(0,0,0,.08))}
    svg{position:absolute;left:0;top:0}`; }
  html() {
    const r = (x, y, w, h, f) => `<rect x="${x}" y="${y}" width="${w}" height="${h}" fill="${f}"/>`;
    const G = '#64ff00';
    const lab = (x, y, w = 23) => `<text x="${x}" y="${y}" textLength="${w}" lengthAdjust="spacingAndGlyphs" font-size="14" fill="#1b1b1b">.055</text>`;
    const disc = x => r(x, 470, 7, 215, 'url(#disc)');
    return `<div class="shade"></div><svg width="1876" height="720" viewBox="22 228 1876 720" font-family="Noto Sans,Open Sans,sans-serif" shape-rendering="crispEdges">
    <defs>
      <linearGradient id="cyl" x1="0" y1="0" x2="0" y2="1"><stop offset="0" stop-color="#828285"/><stop offset=".04" stop-color="#949498"/><stop offset=".14" stop-color="#9c9c9f"/><stop offset=".3" stop-color="#8e8d91"/><stop offset=".5" stop-color="#767679"/><stop offset=".68" stop-color="#58585a"/><stop offset=".84" stop-color="#404042"/><stop offset="1" stop-color="#646369"/></linearGradient>
      <linearGradient id="disc" x1="0" y1="0" x2="0" y2="1"><stop offset="0" stop-color="#8f8f91"/><stop offset=".15" stop-color="#9d9d9f"/><stop offset=".4" stop-color="#868688"/><stop offset=".6" stop-color="#68686a"/><stop offset=".83" stop-color="#3f3f41"/><stop offset="1" stop-color="#6a686f"/></linearGradient>
      <linearGradient id="cylup" gradientUnits="userSpaceOnUse" x1="0" y1="536" x2="0" y2="618"><stop offset="0" stop-color="#838386"/><stop offset=".05" stop-color="#949498"/><stop offset=".2" stop-color="#9c9c9f"/><stop offset=".3" stop-color="#959498"/><stop offset=".6" stop-color="#5c5c5e"/><stop offset=".84" stop-color="#404042"/><stop offset="1" stop-color="#5a595f"/></linearGradient>
      <linearGradient id="cube" x1="0" y1="0" x2="0" y2="1"><stop offset="0" stop-color="#858891"/><stop offset="1" stop-color="#9296a1"/></linearGradient>
      <filter id="bl"><feGaussianBlur stdDeviation="5 1"/></filter>
    </defs>
    ${r(391, 273, 1126, 631, '#fff')}${r(392, 274, 1122, 628, '#bebec0')}
    ${r(411, 294, 1083, 589, '#fff')}${r(412, 295, 1, 587, '#bebec0')}${r(414, 295, 1079, 587, '#bebec0')}
    ${r(694, 361, 186, 156, '#7e7d81')}${r(880, 361, 1, 157, G)}${r(694, 517, 31, 1, G)}${r(848, 517, 33, 1, G)}
    ${r(723, 516, 126, 114, '#7e7d81')}${r(723, 518, 1, 113, G)}${r(849, 518, 1, 113, G)}${r(723, 630, 127, 1, G)}
    ${r(1070, 525, 126, 113, '#7e7d81')}${r(1070, 525, 127, 1, G)}${r(1195, 525, 2, 113, G)}
    ${r(1040, 637, 188, 158, G)}${r(1042, 639, 184, 154, '#7e7d81')}${r(1070, 637, 125, 1, '#7e7d81')}${r(1133, 639, 4, 1, '#ffff20')}
    ${disc(641)}${r(641, 662, 1, 23, '#bebec0')}${disc(960)}${r(966, 470, 1, 215, '#9a9a9c')}${disc(1278)}${r(1284, 482, 1, 73, '#505155')}${r(1284, 636, 1, 32, '#9a9a9e')}
    ${r(206, 576, 6, 3, 'url(#cyl)')}${r(212, 572, 75, 10, 'url(#cyl)')}${r(287, 536, 80, 82, 'url(#cyl)')}
    ${r(371, 536, 20, 82, 'url(#cylup)')}${r(412, 536, 38, 82, 'url(#cylup)')}${r(450, 536, 2, 83, G)}
    ${r(366, 537, 3, 82, G)}
    ${r(1471, 536, 22, 82, 'url(#cylup)')}${r(1515, 536, 34, 82, 'url(#cylup)')}${r(1469, 536, 2, 83, G)}
    ${r(368, 560, 23, 35, 'url(#cyl)')}${r(412, 560, 1081, 35, 'url(#cyl)')}${r(1515, 560, 46, 35, 'url(#cyl)')}
    ${r(1561, 536, 79, 82, 'url(#cyl)')}${r(1640, 536, 2, 83, G)}${r(1642, 572, 66, 10, 'url(#cyl)')}${r(1708, 576, 6, 3, 'url(#cyl)')}
    ${r(367, 569, 1, 11, '#000')}${r(450, 574, 1, 12, '#000')}${r(1469, 574, 1, 12, '#000')}${r(1640, 574, 1, 14, '#000')}
    ${lab(355.5, 590)}${lab(439.5, 574.500)}${lab(1458, 574.500)}${lab(1629, 598)}
    <g shape-rendering="auto"><circle cx="74.300" cy="895" r="5.700" fill="#0a0aa0"/><path d="M75 895.500H94" stroke="#b01010" stroke-width="1.200"/><path d="M94 890L104.500 895.500L94 901Z" fill="#9c0808"/><path d="M74.500 895V915" stroke="#10a818" stroke-width="1.200"/><path d="M68.500 915H80L74.500 925Z" fill="#0a9a12"/><path d="M74.300 895V901" stroke="#5080c0"/>
    <text x="107" y="900" font-size="12" textLength="7" lengthAdjust="spacingAndGlyphs" fill="#f03030">X</text><text x="71" y="935.500" font-size="11" textLength="7" lengthAdjust="spacingAndGlyphs" fill="#28e828">Y</text>
    <rect x="1804" y="257" width="62" height="5" fill="#232836" opacity=".8" filter="url(#bl)"/><rect x="1809.500" y="263.500" width="53" height="53" fill="url(#cube)" stroke="#6f716f"/><rect x="1819" y="273" width="34" height="34" fill="#7d838f"/>
    <text transform="translate(1850.500 284) rotate(180)" font-size="15.500" font-weight="700" textLength="29" lengthAdjust="spacingAndGlyphs" fill="#545a69">BACK</text>
    <rect x="1863.500" y="349.500" width="32.500" height="229" rx="5" fill="#7d8089" stroke="#3e424e" stroke-width="1.500"/><rect x="1865" y="351" width="30" height="226" rx="4" fill="none" stroke="#969aa3" stroke-width=".8"/>
    <circle cx="1889" cy="356" r="4" fill="#50545e"/><path d="M1887 354L1891 358M1891 354L1887 358" stroke="#d8d8da" stroke-width="1.300"/>
    <g stroke="#50545e" stroke-width="1.100" fill="#b4b8c0"><path d="M1880 371.500H1890V382A10 10 0 1 1 1880 371.500Z"/><circle cx="1880" cy="382" r="6" fill="#a0a4ad"/><path d="M1876 386L1872 389M1884 386L1888 389"/>
    <path d="M1874.500 439C1872 435 1870 431 1868.500 428C1871 427 1873 430 1875 432C1874 427 1872.500 423 1872 419.500C1874 418 1875.500 421 1877.500 427L1878.500 418C1880 416 1881.500 418 1881.500 427L1885 419C1887 418 1887 421 1884.500 429L1888 424.500C1890.500 424 1890 427 1888 430C1886.500 434 1886 437 1884.500 439Z"/>
    <path d="M1870 449.500H1880L1883.500 453.500V467.500H1870Z"/><circle cx="1883" cy="464" r="5"/><path d="M1886.500 467.500L1890.500 471.500" stroke-width="2.500"/>
    <g fill="none" stroke="#5a5e68" stroke-width="1.400"><ellipse cx="1880" cy="503" rx="4" ry="10.500"/><path d="M1876 507C1867 507 1867 500 1876 499.500M1880 508.500C1894 508 1894 499 1884 499.500"/><path d="M1877 503H1883M1880 500V506"/></g>
    <rect x="1869.500" y="541.500" width="21" height="14"/><rect x="1873" y="545" width="13.500" height="7.500" fill="#9fa3ac"/><path d="M1869.500 539L1876 534.500L1875.500 538L1884.500 535V539Z"/></g>
    <path d="M1876.500 403.500H1882.500L1879.500 406.500ZM1876.500 481.500H1882.500L1879.500 484.500ZM1876.500 523.500H1882.500L1879.500 526.500Z" fill="#50545e"/><path d="M1867 410.500H1893" stroke="#565a64"/>
    <circle cx="1889" cy="571" r="4" fill="#50545e"/><path d="M1886.500 569.500H1891.500M1887 571.500H1891L1889 573.500Z" stroke="#d8d8da" fill="#d8d8da" stroke-width=".8"/></g>
    </svg>`;
  }
});

/* Active MDI child window with classic Aero frame. */
define('mdi-window', class extends Base {
  css() { return `:host{display:block;box-sizing:border-box;width:1894px;height:767px;border:1px solid #101418;border-radius:7px 7px 0 0;background:linear-gradient(#b9d1ea 0,#b9d1ea 37px,#dfe9f5 127px,#b9d1ea 128px);box-shadow:inset 1px 1px 0 #fff,inset -1px -1px 0 #35bfe0;overflow:hidden}
    .bar{display:flex;align-items:center;height:36px;margin:1px 1px 0;padding:0 10px 0 9px;background:linear-gradient(#99b4d1,#a3bddb 55%,#b9d1ea);color:#111;gap:4px}
    .sp{flex:1}.btns{display:flex;gap:2px;padding-top:7px;height:24px}.b{width:42px;height:24px;box-sizing:border-box;border:1px solid #5e7390;border-radius:2px;box-shadow:inset 0 0 0 1px #dbe7f5;background:linear-gradient(#c4d6ec 45%,#98b3d0 46%,#b8d0ea);display:flex;align-items:center;justify-content:center}
    .x{border-color:#4a1420;box-shadow:inset 0 0 0 1px #eab0a4;background:linear-gradient(#e5a296 0,#dc8575 45%,#b83c22 46%,#cf6a50)}
    .view{padding-left:8px}` ; }
  html() { return `<div class="bar"><ui-icon name="asm" w="20" h="20" style="padding-top:6px"></ui-icon><fit-text w="100" style="padding-top:8px">${this.getAttribute('caption')}</fit-text><div class="sp"></div><div class="btns"><div class="b"><ui-icon name="wmin" w="17" h="6"></ui-icon></div><div class="b"><ui-icon name="wmax" w="17" h="15"></ui-icon></div><div class="b x"><ui-icon name="wclose" w="18" h="15"></ui-icon></div></div></div><div class="view"><slot></slot></div>`; }
});
define('mdi-area', class extends Base {
  css() { return `:host{display:block;position:relative;height:793px;background:linear-gradient(#fff 0,#fbfbfc 60px,#a2a3a8 600px,#a1a2a7);border-left:1px solid #5c5c60;box-sizing:border-box}
    .top{height:3px;background:linear-gradient(#9c9c9c 33%,#5a5355 34%);margin-left:-1px}
    .edge{position:absolute;right:0;top:3px;bottom:0;width:2px;background:#dcdce0}
    .base{position:absolute;left:-1px;right:0;bottom:0;height:2px;background:linear-gradient(#e8e8ea 50%,#fff 50%)}
    .back{position:absolute;left:0;top:2px;width:1902px;height:751px;box-sizing:border-box;border:1px solid #44474c;border-radius:6px 6px 0 0;background:linear-gradient(#bfccda 0,#c8d6e5 24px,#d7e4f2 50px);box-shadow:inset 1px 1px 0 #e8f0f8}
    .inner{position:absolute;left:8px;top:37px;width:10px;bottom:7px;border:1px solid #777;border-right:0;background:#fff;border-bottom-color:#fff}
    .hint{position:absolute;right:10px;top:9px;display:flex;gap:4px}.hint i{width:40px;height:1px;background:#717d98}
    .front{position:absolute;left:12px;top:14px}`; }
  html() { return '<div class="top"></div><div class="edge"></div><div class="base"></div><div class="back"><div class="inner"></div><div class="hint"><i></i><i></i><i></i></div></div><div class="front"><slot></slot></div>'; }
});

define('doc-tabs', class extends Base {
  css() { return ':host{display:block;height:32px;background:#5f5f5f;color:#d0d0d0}' + ROWCSS; }
  html() {
    const Y = 969;
    return row([I(4, 976, 20, 20, 'cascade'), I(34, 976, 19, 20, 'grid'), I(64, 976, 20, 20, 'hsplit'), I(94, 976, 19, 20, 'vsplit'), I(128, 981, 13, 10, 'tri'), B(149, 971, 1, 30, 'background:#9a9a9a'), T(160, 987, 65, 'My Home'),
      B(240, 971, 172, 30, 'background:#f6f6f6;color:#555;display:flex;align-items:center;gap:11px;padding-left:10px;box-sizing:border-box', '<fit-text w="126" style="padding-top:2px">pro assembly 6.iam</fit-text><ui-icon name="tabx" w="10" h="10"></ui-icon>'), B(412, 971, 1, 30, 'background:#9a9a9a')], 0, Y);
  }
});
define('status-bar', class extends Base {
  css() { return ':host{display:block;height:29px;background:#f6f6f6;color:#111}' + ROWCSS; }
  html() { const s = x => B(x, 1003, 1, 27, 'background:#ccc'); return row([T(0, 1018, 41, 'Ready'), s(1842), T(1854, 1018, 15, '15'), s(1882), T(1891, 1018, 8, '9')], 0, 1001); }
});
define('task-bar', class extends Base {
  css() { return ':host{display:block;height:50px;background:#1d1d1d;color:#f0f0f0}' + ROWCSS; }
  html() {
    return row([I(20, 1045, 20, 20, 'win'),
      B(60, 1030, 430, 50, 'box-sizing:border-box;background:#f2f2f2;border:1px solid #bdbdbd;color:#2c2c2c;display:flex;align-items:center;gap:15px;padding-left:14px', '<ui-icon name="search" w="20" h="20"></ui-icon><fit-text w="164" style="font-size:19px;padding-top:2px">Type here to search</fit-text>'),
      I(510, 1045, 19, 20, 'ring'), I(570, 1045, 20, 20, 'tview'), I(629, 1040, 30, 30, 'shareit'), I(694, 1042, 24, 27, 'edge'), I(754, 1043, 28, 23, 'folder'), I(815, 1040, 29, 29, 'store'), I(877, 1042, 30, 24, 'mail'), I(939, 1042, 30, 26, 'dropbox'), I(1007, 1040, 16, 30, 'bluefox'),
      B(1053, 1030, 51, 50, 'display:flex;flex-direction:column;align-items:center;justify-content:space-between;padding-top:11px;box-sizing:border-box', '<ui-icon name="chrome" w="28" h="28" style="margin-right:2px"></ui-icon><div style="height:3px;width:51px;background:#76b9ed"></div>'),
      B(1110, 1030, 61, 50, 'background:#4c4c4c;display:flex;flex-direction:column;align-items:center;justify-content:space-between;padding-top:10px;box-sizing:border-box', '<div style="height:30px;position:relative;margin-right:1px"><ui-icon name="inv" w="30" h="30"></ui-icon><fit-text w="11" style="position:absolute;left:16px;top:22px;font-size:6px;font-weight:700;color:#d9812f;height:7px;line-height:7px">PRO</fit-text></div><div style="height:3px;width:61px;background:#76b9ed"></div>'),
      B(1534, 1042, 28, 28, 'box-sizing:border-box;border:2.5px solid #fff;border-radius:50%;background:#1592dc;color:#fff;font-weight:700;font-size:21px;line-height:23px;text-align:center', '?'),
      I(1574, 1050, 16, 10, 'chev'), I(1605, 1047, 16, 17, 'wifi'), I(1633, 1050, 19, 11, 'batt'), I(1662, 1047, 20, 18, 'cloud'), I(1692, 1047, 20, 16, 'vol'), T(1726, 1056, 28, 'ENG'),
      { x: 1771, y: 1034, w: 75, html: '<div style="display:flex;flex-direction:column;align-items:center;gap:3px"><fit-text w="35">20:29</fit-text><fit-text w="75">14-10-2019</fit-text></div>' },
      I(1869, 1045, 20, 20, 'note'), B(1914, 1030, 1, 50, 'background:#666')], 0, 1030);
  }
});

define('inventor-app', class extends Base {
  css() { return ':host{display:flex;flex-direction:column;width:1920px;height:1080px;overflow:hidden}:host>*{flex:none}'; }
  html() { return '<title-bar></title-bar><ribbon-tabs></ribbon-tabs><tool-ribbon></tool-ribbon><mdi-area><mdi-window caption="pro assembly 6"><model-view></model-view></mdi-window></mdi-area><doc-tabs></doc-tabs><status-bar></status-bar><task-bar></task-bar>'; }
});
</script>
</body>
</html>
